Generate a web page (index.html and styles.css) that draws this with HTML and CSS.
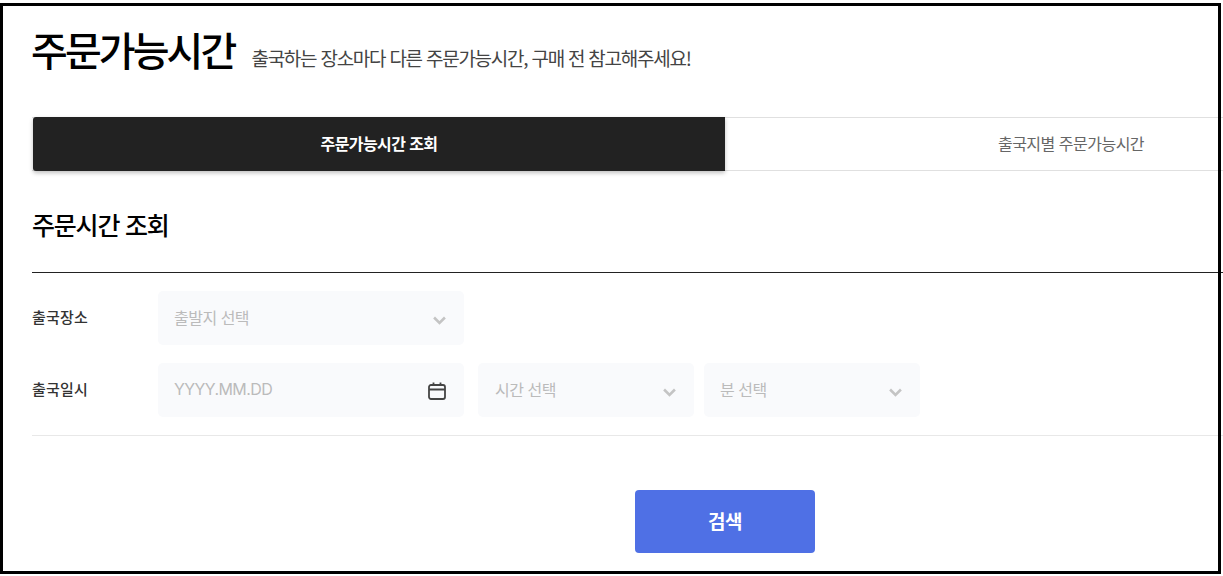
FILE: index.html
```html
<!DOCTYPE html>
<html lang="ko">
<head>
<meta charset="utf-8">
<title>주문가능시간</title>
<link rel="stylesheet" href="styles.css">
</head>
<body>
<div class="page">
  <header class="head">
    <h1 class="title">주문가능시간</h1>
    <p class="sub">출국하는 장소마다 다른 주문가능시간, 구매 전 참고해주세요!</p>
  </header>
  <nav class="tabs">
    <div class="tab active">주문가능시간 조회</div>
    <div class="tab">출국지별 주문가능시간</div>
  </nav>
  <h2 class="section">주문시간 조회</h2>
  <div class="form">
    <div class="row">
      <div class="label">출국장소</div>
      <div class="field wide"><span>출발지 선택</span>
        <svg class="chev" viewBox="0 0 12 8"><path d="M1 1.2 6 6.2 11 1.2"/></svg>
      </div>
    </div>
    <div class="row">
      <div class="label">출국일시</div>
      <div class="field wide"><span class="latin">YYYY.MM.DD</span>
        <svg class="cal" viewBox="0 0 18 18"><rect x="1" y="3" width="16" height="14" rx="2"/><path d="M1 7.5H17M5.5 .5V3.5M12.5 .5V3.5"/></svg>
      </div>
      <div class="field mid"><span>시간 선택</span>
        <svg class="chev" viewBox="0 0 12 8"><path d="M1 1.2 6 6.2 11 1.2"/></svg>
      </div>
      <div class="field mid"><span>분 선택</span>
        <svg class="chev" viewBox="0 0 12 8"><path d="M1 1.2 6 6.2 11 1.2"/></svg>
      </div>
    </div>
  </div>
  <div class="actions"><button class="search" type="button">검색</button></div>
</div>
</body>
</html>
```
FILE: styles.css
```css
* { box-sizing: border-box; }
html, body { margin: 0; height: 100%; }
body {
  width: 1223px;
  height: 576px;
  overflow: hidden;
  background: #fff;
  font-family: "Noto Sans CJK KR", "Noto Sans", sans-serif;
}
.page {
  position: relative;
  width: 1223px;
  height: 576px;
  padding: 0 0 0 32px;
  overflow: hidden;
}
.page::after {
  content: "";
  position: absolute;
  box-sizing: border-box;
  left: 0;
  top: 3px;
  width: 1221px;
  height: 571px;
  border: 3px solid #000;
  pointer-events: none;
}
.head {
  display: flex;
  align-items: baseline;
  height: 117px;
  padding-top: 20px;
}
.title {
  margin: 0 0 0 -1px;
  font-size: 40px;
  line-height: 58px;
  font-weight: 500;
  letter-spacing: -2.9px;
  color: #000;
}
.sub {
  margin: 0 0 0 17px;
  font-size: 19px;
  font-weight: 400;
  letter-spacing: -1.25px;
  color: #444;
}
.tabs {
  display: flex;
  height: 54px;
  border-top: 1px solid #e0e0e0;
  border-bottom: 1px solid #e0e0e0;
}
.tab {
  width: 692px;
  flex: none;
  display: flex;
  align-items: center;
  justify-content: center;
  padding-bottom: 2px;
  font-size: 16px;
  letter-spacing: -.5px;
  color: #666;
}
.tab.active {
  margin: -1px 0 -1px 1px;
  height: 54px;
  background: #222;
  color: #fff;
  font-weight: 700;
  letter-spacing: -.6px;
  border-radius: 3px 0 0 3px;
  box-shadow: 0 2px 4px rgba(0,0,0,.25);
}
.section {
  margin: 0;
  height: 102px;
  border-bottom: 1px solid #222;
  padding-top: 35px;
  font-size: 25px;
  line-height: 36px;
  font-weight: 500;
  letter-spacing: -1.2px;
  color: #000;
}
.form {
  padding-top: 18px;
  height: 163px;
  border-bottom: 1px solid #e8e8e8;
}
.row { display: flex; align-items: center; height: 54px; margin-bottom: 18px; }
.label {
  width: 126px;
  padding-bottom: 3px;
  font-size: 15px;
  font-weight: 500;
  letter-spacing: .2px;
  color: #333;
}
.field {
  display: flex;
  align-items: center;
  justify-content: space-between;
  height: 54px;
  padding: 0 18px 0 17px;
  background: #f9fafc;
  border-radius: 5px;
  font-size: 16px;
  letter-spacing: -.5px;
  color: #bbb;
}
.field span { padding-bottom: 2px; }
.latin { font-family: Inter, "Noto Sans CJK KR", sans-serif; font-size: 16px; letter-spacing: -.6px; }
.wide { width: 306px; padding-left: 16px; }
.mid { width: 216px; margin-left: 10px; }
.mid + .mid { padding-left: 16px; }
.row .wide + .mid { margin-left: 14px; }
.chev { width: 13px; height: 9px; margin-top: 4px; fill: none; stroke: #c4c4c4; stroke-width: 2.4; }
.cal { width: 18px; height: 18px; margin-top: 2px; fill: none; stroke: #444; stroke-width: 1.8; }
.actions { display: flex; padding: 54px 0 0 603px; }
.search {
  width: 180px;
  height: 63px;
  padding: 0 0 2px;
  border: 0;
  border-radius: 4px;
  background: #4f70e5;
  color: #fff;
  font-family: inherit;
  font-size: 19px;
  font-weight: 700;
  letter-spacing: -.4px;
}
```
